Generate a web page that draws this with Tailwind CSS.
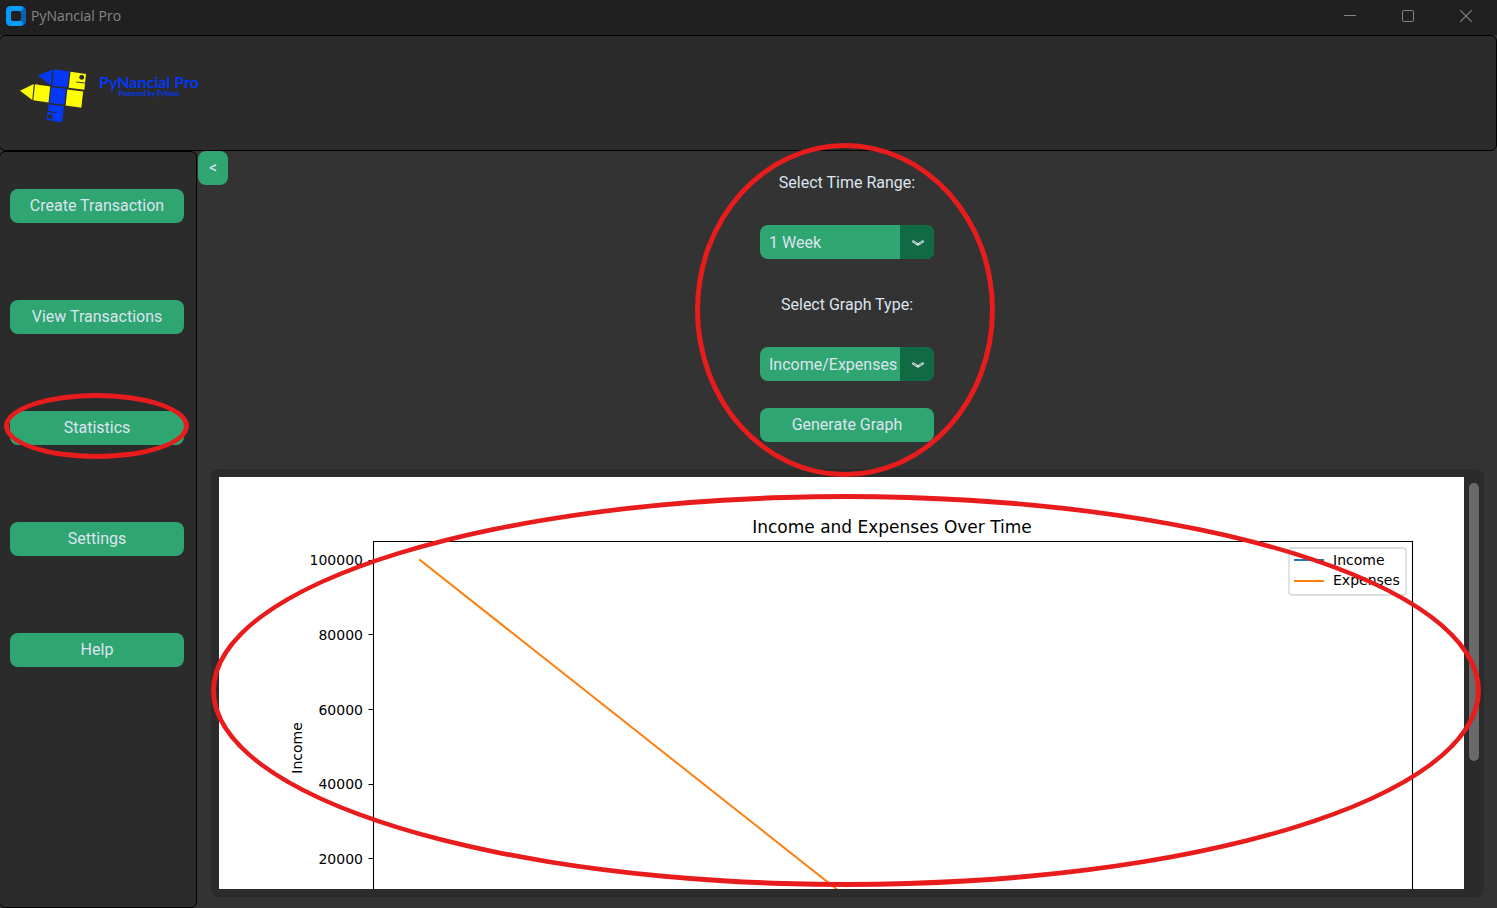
<!DOCTYPE html>
<html lang="en">
<head>
<meta charset="utf-8">
<meta name="viewport" content="width=device-width, initial-scale=1">
<title>PyNancial Pro</title>
<script src="https://cdn.jsdelivr.net/npm/@tailwindcss/browser@4"></script>
</head>
<body class="flex h-screen flex-col overflow-hidden bg-[#333333] font-['Roboto',sans-serif] text-base text-[#dce4ee]">

<!-- Title bar -->
<div class="flex h-[35px] shrink-0 items-center justify-between bg-[#202020] pb-[3px] text-[#858585]">
  <div class="flex items-center gap-[5px] pl-1.5">
    <svg class="size-5" viewBox="0 0 20 20" aria-hidden="true">
      <rect width="20" height="20" rx="5" fill="#0763ad"/>
      <path d="M5 0h10q2 0 2 2q0 2-2 3v10q2 1 2 3q0 2-2 2H5q-5 0-5-5V5q0-5 5-5z" fill="#069bff"/>
      <rect x="5" y="5" width="10" height="10" rx="2" fill="#202020"/>
    </svg>
    <span class="font-['Open_Sans',sans-serif] text-sm">PyNancial Pro</span>
  </div>
  <div class="flex h-full items-center pr-0.5">
    <button class="flex h-full w-[58px] items-center justify-center" aria-label="Minimize">
      <svg class="size-3" viewBox="0 0 12 12"><path d="M0 5.5h12" stroke="currentColor"/></svg>
    </button>
    <button class="flex h-full w-[58px] items-center justify-center" aria-label="Maximize">
      <svg class="size-3" viewBox="0 0 12 12"><rect x=".5" y=".5" width="11" height="11" rx="1" fill="none" stroke="currentColor"/></svg>
    </button>
    <button class="flex h-full w-[58px] items-center justify-center" aria-label="Close">
      <svg class="size-3" viewBox="0 0 12 12"><path d="M0 0l12 12M12 0L0 12" stroke="currentColor" stroke-width="1.1"/></svg>
    </button>
  </div>
</div>

<!-- Brand header -->
<header class="-ml-px flex h-[116px] shrink-0 items-center rounded-md border border-black bg-[#2b2b2b] pl-[18px]">
  <svg class="mt-1.5 h-[58px] w-[70px]" viewBox="18 67 70 58" role="img" aria-label="PyNancial Pro logo">
    <g fill="#0438f5">
      <path d="M38 75.5L52.3 69.5L51 85.6z"/>
      <path d="M53.7 69.3L69.4 71.6L67.4 87.6L52.2 85.7z"/>
      <path d="M51.3 87L66.2 89L64.2 104.8L49.3 102.8z"/>
      <path d="M48.7 104.2L64 106.2L62.2 122.2L46.7 120z"/>
    </g>
    <g fill="#ffff00">
      <path d="M70.5 71.8L86 74L84.3 89.8L68.7 87.7z"/>
      <path d="M67.3 89.4L83.2 91.6L81.3 107.8L65.6 105.4z"/>
      <path d="M35 84.3L50.2 86.4L48.5 102.4L33.3 100.3z"/>
      <path d="M20 90.7L33.8 84L32.3 100z"/>
    </g>
    <g fill="#2b2b2b" stroke="#2b2b2b">
      <circle cx="81.7" cy="77.3" r="2"/>
      <path d="M76.3 82L84.7 83"/>
      <circle cx="50.3" cy="116.7" r="2"/>
      <path d="M47.7 111.3L56 112.7"/>
    </g>
  </svg>
  <div class="flex flex-col items-center pb-4 pl-[11px] font-['Lato',sans-serif] text-[#0438f5]">
    <span class="text-base leading-4 font-bold">PyNancial Pro</span>
    <span class="text-[7px] leading-[7px] font-bold">Powered by Python</span>
  </div>
</header>

<div class="flex min-h-0 flex-1">
  <!-- Navigation -->
  <nav class="-ml-px flex w-[198px] shrink-0 flex-col gap-[77px] rounded-md border border-black bg-[#2b2b2b] px-2.5 pt-[37px]" aria-label="Main">
    <button class="h-[34px] w-[174px] rounded-lg bg-[#2fa572]">Create Transaction</button>
    <button class="h-[34px] w-[174px] rounded-lg bg-[#2fa572]">View Transactions</button>
    <div class="relative h-[34px] w-[174px]">
      <button class="h-full w-full rounded-lg bg-[#2fa572]">Statistics</button>
      <div class="pointer-events-none absolute -top-[18px] -right-[5px] -bottom-[14px] -left-[6px] rounded-[50%] border-5 border-[#e81c1c]"></div>
    </div>
    <button class="h-[34px] w-[174px] rounded-lg bg-[#2fa572]">Settings</button>
    <button class="h-[34px] w-[174px] rounded-lg bg-[#2fa572]">Help</button>
  </nav>

  <main class="flex min-w-0 flex-1 flex-col">
    <div class="flex items-start justify-between">
      <button class="ml-px h-[34px] w-[30px] rounded-lg bg-[#2fa572]" aria-label="Collapse menu">&lt;</button>

      <form class="relative z-10 flex w-[174px] flex-col pt-[18px] pb-[27px]">
        <label for="range" class="pt-0.5 text-center leading-6">Select Time Range:</label>
        <div class="relative mt-[30px] h-[34px]">
          <select id="range" class="h-full w-full appearance-none rounded-lg bg-[#2fa572] pt-0.5 pr-[34px] pl-[9px]">
            <option>1 Week</option>
          </select>
          <span class="pointer-events-none absolute inset-y-0 right-0 flex w-[34px] items-center justify-center rounded-r-lg bg-[#106a43] pt-0.5 pl-0.5">
            <svg class="h-2 w-3" viewBox="0 0 12 8" fill="none" stroke-linecap="round" stroke-linejoin="round">
              <path d="M1.3 2.5L6 5.5L10.7 2.5" stroke="#dce4ee" stroke-width="2.4"/>
              <path d="M1.8 2.7L4.4 4.4M10.2 2.7L7.6 4.4" stroke="#2f7d5b" stroke-width=".8"/>
            </svg>
          </span>
        </div>
        <label for="type" class="mt-8 pt-0.5 text-center leading-6">Select Graph Type:</label>
        <div class="relative mt-[30px] h-[34px]">
          <select id="type" class="h-full w-full appearance-none rounded-lg bg-[#2fa572] pt-0.5 pr-[34px] pl-[9px]">
            <option>Income/Expenses</option>
          </select>
          <span class="pointer-events-none absolute inset-y-0 right-0 flex w-[34px] items-center justify-center rounded-r-lg bg-[#106a43] pt-0.5 pl-0.5">
            <svg class="h-2 w-3" viewBox="0 0 12 8" fill="none" stroke-linecap="round" stroke-linejoin="round">
              <path d="M1.3 2.5L6 5.5L10.7 2.5" stroke="#dce4ee" stroke-width="2.4"/>
              <path d="M1.8 2.7L4.4 4.4M10.2 2.7L7.6 4.4" stroke="#2f7d5b" stroke-width=".8"/>
            </svg>
          </span>
        </div>
        <button type="button" class="mt-[27px] h-[34px] rounded-lg bg-[#2fa572]">Generate Graph</button>
        <div class="pointer-events-none absolute -top-2 -right-[61px] -bottom-2 -left-[65px] rounded-[50%] border-5 border-[#e81c1c]"></div>
      </form>

      <div class="w-[31px]"></div>
    </div>

    <!-- Graph panel -->
    <section class="relative mr-[13px] mb-[11px] ml-[14px] flex min-h-0 flex-1 rounded-lg bg-[#2b2b2b] py-2 pr-[5px] pl-2" aria-label="Graph">
      <div class="min-w-0 flex-1 overflow-hidden bg-white">
        <svg class="h-full w-full font-['DejaVu_Sans',sans-serif] text-sm" viewBox="0 0 1245 412" preserveAspectRatio="xMinYMin slice" fill="#000" role="img" aria-label="Income and Expenses Over Time">
          <text x="673" y="56" text-anchor="middle" class="text-[17px]">Income and Expenses Over Time</text>
          <path d="M154.5 420V64.5H1193.5V420M149.5 83.5h5M149.5 157.5h5M149.5 232.5h5M149.5 307.5h5M149.5 381.5h5" fill="none" stroke="#000" stroke-width="1.1"/>
          <g text-anchor="end">
            <text x="144" y="88">100000</text>
            <text x="144" y="163">80000</text>
            <text x="144" y="238">60000</text>
            <text x="144" y="312">40000</text>
            <text x="144" y="387">20000</text>
          </g>
          <text transform="translate(83 271) rotate(-90)" text-anchor="middle">Income</text>
          <path d="M201 83L625 418" fill="none" stroke="#ff7f0e" stroke-width="2" stroke-linecap="square"/>
          <rect x="1070" y="71" width="117" height="47" rx="3" fill="#fff" stroke="#d4d4d4" stroke-width="1.3"/>
          <path d="M1075 83h30" stroke="#1f77b4" stroke-width="2"/>
          <path d="M1075 104h30" stroke="#ff7f0e" stroke-width="2"/>
          <text x="1114" y="88">Income</text>
          <text x="1114" y="108">Expenses</text>
        </svg>
      </div>
      <div class="ml-[5px] w-2.5 pt-1.5">
        <div class="h-[278px] rounded-[5px] bg-[#696969]"></div>
      </div>
      <div class="pointer-events-none absolute top-[25px] right-[3px] bottom-[10px] left-0 rounded-[50%] border-5 border-[#e81c1c]"></div>
    </section>
  </main>
</div>
</body>
</html>
